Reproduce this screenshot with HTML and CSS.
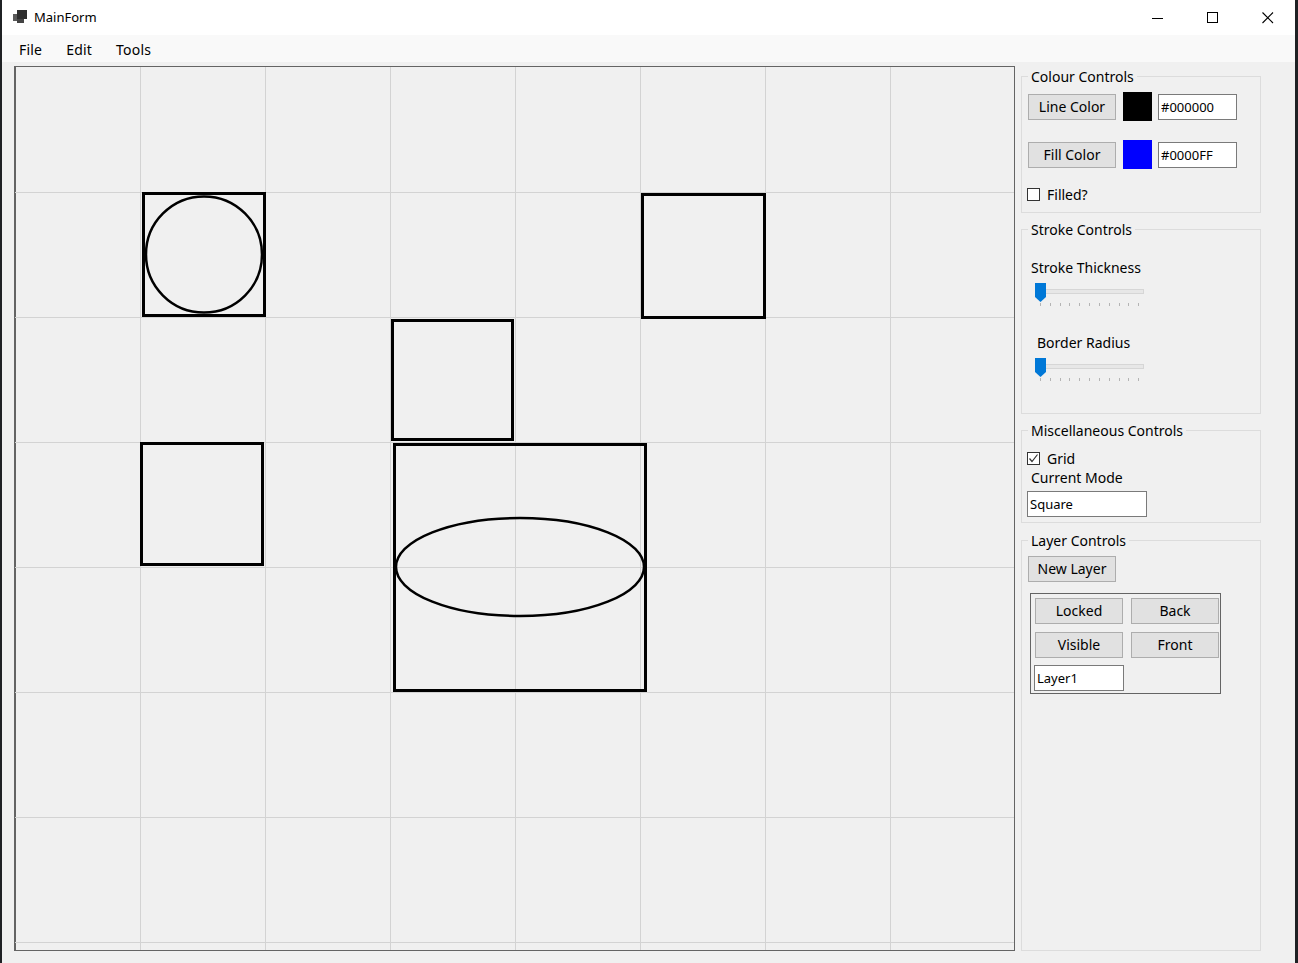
FILE: index.html
```html
<!DOCTYPE html>
<html lang="en">
<head>
<meta charset="utf-8">
<title>MainForm</title>
<link rel="stylesheet" href="styles.css">
</head>
<body>
<div class="window">
  <div class="titlebar">
    <svg class="app-icon" width="14" height="13" viewBox="0 0 14 13">
      <rect x="0" y="4" width="4" height="7" fill="#5a5a5a"/>
      <rect x="4" y="0" width="10" height="9" fill="#2e2e2e"/>
      <rect x="4" y="9" width="7" height="4" fill="#444"/>
    </svg>
    <span class="title">MainForm</span>
    <div class="caption">
      <span class="cap-btn"><svg width="12" height="12" viewBox="0 0 12 12"><line x1="0" y1="6.5" x2="11" y2="6.5" stroke="#000" stroke-width="1"/></svg></span>
      <span class="cap-btn"><svg width="12" height="12" viewBox="0 0 12 12"><rect x="0.5" y="0.5" width="10" height="10" fill="none" stroke="#000" stroke-width="1"/></svg></span>
      <span class="cap-btn"><svg width="12" height="12" viewBox="0 0 12 12"><path d="M0.5 0.5 L11 11 M11 0.5 L0.5 11" stroke="#000" stroke-width="1.1" fill="none"/></svg></span>
    </div>
  </div>
  <div class="menubar">
    <span class="menu-item">File</span>
    <span class="menu-item">Edit</span>
    <span class="menu-item">Tools</span>
  </div>
  <div class="main">
    <div class="canvas">
      <svg width="999" height="883" viewBox="0 0 999 883">
        <g stroke="#d3d3d3" stroke-width="1">
          <line x1="125.5" y1="0" x2="125.5" y2="883"/>
          <line x1="250.5" y1="0" x2="250.5" y2="883"/>
          <line x1="375.5" y1="0" x2="375.5" y2="883"/>
          <line x1="500.5" y1="0" x2="500.5" y2="883"/>
          <line x1="625.5" y1="0" x2="625.5" y2="883"/>
          <line x1="750.5" y1="0" x2="750.5" y2="883"/>
          <line x1="875.5" y1="0" x2="875.5" y2="883"/>
          <line x1="0" y1="125.5" x2="999" y2="125.5"/>
          <line x1="0" y1="250.5" x2="999" y2="250.5"/>
          <line x1="0" y1="375.5" x2="999" y2="375.5"/>
          <line x1="0" y1="500.5" x2="999" y2="500.5"/>
          <line x1="0" y1="625.5" x2="999" y2="625.5"/>
          <line x1="0" y1="750.5" x2="999" y2="750.5"/>
          <line x1="0" y1="875.5" x2="999" y2="875.5"/>
        </g>
        <g fill="none" stroke="#000">
          <rect x="128.5" y="126.5" width="121" height="122" stroke-width="3"/>
          <circle cx="189" cy="187.5" r="58" stroke-width="2.5"/>
          <rect x="627.5" y="127.5" width="122" height="123" stroke-width="3"/>
          <rect x="377.5" y="253.5" width="120" height="119" stroke-width="3"/>
          <rect x="126.5" y="376.5" width="121" height="121" stroke-width="3"/>
          <rect x="379.5" y="377.5" width="251" height="246" stroke-width="3"/>
          <ellipse cx="505" cy="500" rx="124" ry="49" stroke-width="2.5"/>
        </g>
      </svg>
    </div>
    <div class="panel">
      <fieldset class="group g-colour">
        <legend>Colour Controls</legend>
        <div class="color-row">
          <button class="btn">Line Color</button>
          <span class="swatch swatch-black"></span>
          <input class="text-input hex" type="text" value="#000000">
        </div>
        <div class="color-row row-2">
          <button class="btn">Fill Color</button>
          <span class="swatch swatch-blue"></span>
          <input class="text-input hex" type="text" value="#0000FF">
        </div>
        <div class="check-row filled-row">
          <span class="check-box"></span>
          <span class="check-label">Filled?</span>
        </div>
      </fieldset>

      <fieldset class="group g-stroke">
        <legend>Stroke Controls</legend>
        <div class="label label-thick">Stroke Thickness</div>
        <svg class="slider" width="115" height="26" viewBox="0 0 115 26">
          <rect x="7.5" y="8.5" width="103" height="4" fill="#e7e7e7" stroke="#d6d6d6"/>
          <g stroke="#b4b4b4" stroke-width="1">
            <line x1="7.5" y1="22" x2="7.5" y2="25"/>
            <line x1="17.5" y1="22" x2="17.5" y2="25"/>
            <line x1="27.5" y1="22" x2="27.5" y2="25"/>
            <line x1="36.5" y1="22" x2="36.5" y2="25"/>
            <line x1="46.5" y1="22" x2="46.5" y2="25"/>
            <line x1="56.5" y1="22" x2="56.5" y2="25"/>
            <line x1="66.5" y1="22" x2="66.5" y2="25"/>
            <line x1="76.5" y1="22" x2="76.5" y2="25"/>
            <line x1="86.5" y1="22" x2="86.5" y2="25"/>
            <line x1="95.5" y1="22" x2="95.5" y2="25"/>
            <line x1="105.5" y1="22" x2="105.5" y2="25"/>
          </g>
          <polygon points="2,2 13,2 13,16 7.5,21 2,16" fill="#0078d7"/>
        </svg>
        <div class="label label-radius">Border Radius</div>
        <svg class="slider" width="115" height="26" viewBox="0 0 115 26">
          <rect x="7.5" y="8.5" width="103" height="4" fill="#e7e7e7" stroke="#d6d6d6"/>
          <g stroke="#b4b4b4" stroke-width="1">
            <line x1="7.5" y1="22" x2="7.5" y2="25"/>
            <line x1="17.5" y1="22" x2="17.5" y2="25"/>
            <line x1="27.5" y1="22" x2="27.5" y2="25"/>
            <line x1="36.5" y1="22" x2="36.5" y2="25"/>
            <line x1="46.5" y1="22" x2="46.5" y2="25"/>
            <line x1="56.5" y1="22" x2="56.5" y2="25"/>
            <line x1="66.5" y1="22" x2="66.5" y2="25"/>
            <line x1="76.5" y1="22" x2="76.5" y2="25"/>
            <line x1="86.5" y1="22" x2="86.5" y2="25"/>
            <line x1="95.5" y1="22" x2="95.5" y2="25"/>
            <line x1="105.5" y1="22" x2="105.5" y2="25"/>
          </g>
          <polygon points="2,2 13,2 13,16 7.5,21 2,16" fill="#0078d7"/>
        </svg>
      </fieldset>

      <fieldset class="group g-misc">
        <legend>Miscellaneous Controls</legend>
        <div class="check-row grid-row">
          <span class="check-box"><svg width="11" height="11" viewBox="0 0 11 11"><polyline points="1.5,5.5 4,8.5 9.5,1.5" fill="none" stroke="#333" stroke-width="1.2"/></svg></span>
          <span class="check-label">Grid</span>
        </div>
        <div class="label label-mode">Current Mode</div>
        <input class="text-input mode-input" type="text" value="Square">
      </fieldset>

      <fieldset class="group g-layer">
        <legend>Layer Controls</legend>
        <button class="btn new-layer">New Layer</button>
        <div class="layer-box">
          <div class="layer-grid">
            <button class="btn">Locked</button>
            <button class="btn">Back</button>
            <button class="btn">Visible</button>
            <button class="btn">Front</button>
          </div>
          <input class="text-input layer-input" type="text" value="Layer1">
        </div>
      </fieldset>
    </div>
  </div>
</div>
</body>
</html>
```

FILE: styles.css
```css
* { box-sizing: border-box; }

html, body {
  margin: 0;
  padding: 0;
  background: #1f2124;
  height: 963px;
  overflow: hidden;
}

body {
  font-family: "Noto Sans", "Open Sans", sans-serif;
  color: #000;
}

.window {
  margin-left: 2px;
  width: 1293px;
  height: 963px;
  background: #f0f0f0;
  display: flex;
  flex-direction: column;
}

.titlebar {
  height: 35px;
  background: #ffffff;
  display: flex;
  align-items: center;
  flex: none;
}

.app-icon {
  margin-left: 11px;
  margin-top: -2px;
}

.title {
  margin-left: 7px;
  font-size: 13px;
  color: #000;
  margin-top: -1px;
}

.caption {
  margin-left: auto;
  display: flex;
  height: 35px;
}

.cap-btn {
  width: 55px;
  height: 35px;
  display: flex;
  align-items: center;
  justify-content: center;
}

.menubar {
  height: 27px;
  background: #f9f9f9;
  display: flex;
  align-items: center;
  padding-left: 17px;
  padding-top: 1px;
  gap: 24px;
  font-size: 14px;
  flex: none;
}

.menu-item { letter-spacing: 0.2px; }

.main {
  flex: 1;
  display: flex;
  padding-top: 4px;
  padding-bottom: 12px;
}

.canvas {
  margin-left: 12px;
  width: 1001px;
  height: 885px;
  border: 1px solid #646464;
  border-left-width: 2px;
  background: #f0f0f0;
  flex: none;
}

.canvas svg {
  display: block;
  margin-left: -1px;
}

.panel {
  margin-left: 6px;
  width: 240px;
  display: flex;
  flex-direction: column;
}

.group {
  margin: 0;
  border: 1px solid #dcdcdc;
  padding: 0 6px;
  min-width: 0;
}

.group legend {
  padding: 1px 3px 0 3px;
  font-size: 14px;
  line-height: 20px;
}

.g-colour { padding-top: 5px; padding-bottom: 8px; }
.g-stroke { margin-top: 6px; padding-top: 18px; padding-bottom: 31px; }
.g-misc { margin-top: 6px; padding-top: 7px; padding-bottom: 5px; }
.g-layer { margin-top: 7px; padding-top: 5px; flex: 1; }

.btn {
  display: block;
  width: 88px;
  height: 26px;
  padding: 0;
  margin: 0;
  background: #e1e1e1;
  border: 1px solid #adadad;
  border-radius: 0;
  font-family: "Noto Sans", "Open Sans", sans-serif;
  font-size: 14px;
  color: #000;
  line-height: 22px;
}

.color-row {
  display: flex;
  align-items: center;
  height: 29px;
}

.row-2 { margin-top: 19px; }

.swatch {
  width: 29px;
  height: 29px;
  margin-left: 7px;
  display: block;
}

.swatch-black { background: #000000; }
.swatch-blue { background: #0000ff; }

.text-input {
  display: block;
  height: 26px;
  border: 1px solid #7a7a7a;
  background: #ffffff;
  font-family: "Noto Sans", "Open Sans", sans-serif;
  font-size: 13px;
  color: #000;
  padding: 0 2px;
  margin: 0;
  border-radius: 0;
  outline: none;
}

.hex {
  width: 79px;
  margin-left: 6px;
}

.check-row {
  display: flex;
  align-items: center;
  height: 20px;
  margin-left: -1px;
}

.filled-row { margin-top: 15px; }

.check-box {
  width: 13px;
  height: 13px;
  border: 1px solid #333;
  background: #fff;
  display: flex;
  align-items: center;
  justify-content: center;
}

.check-label {
  margin-left: 7px;
  font-size: 14px;
}

.label {
  font-size: 14px;
  line-height: 20px;
  height: 20px;
}

.label-thick { margin-left: 3px; }
.label-radius { margin-left: 9px; margin-top: 26px; }
.label-mode { margin-left: 3px; }

.slider {
  display: block;
  margin-left: 5px;
  margin-top: 3px;
}

.mode-input {
  width: 120px;
  margin-left: -1px;
  margin-top: 3px;
}

.new-layer { margin-top: 0; }

.layer-box {
  margin-top: 11px;
  margin-left: 2px;
  width: 191px;
  border: 1px solid #646464;
  padding: 4px 0 2px 4px;
}

.layer-grid {
  display: grid;
  grid-template-columns: 88px 88px;
  column-gap: 8px;
  row-gap: 8px;
}

.layer-input {
  width: 90px;
  margin-left: -1px;
  margin-top: 7px;
}
```
